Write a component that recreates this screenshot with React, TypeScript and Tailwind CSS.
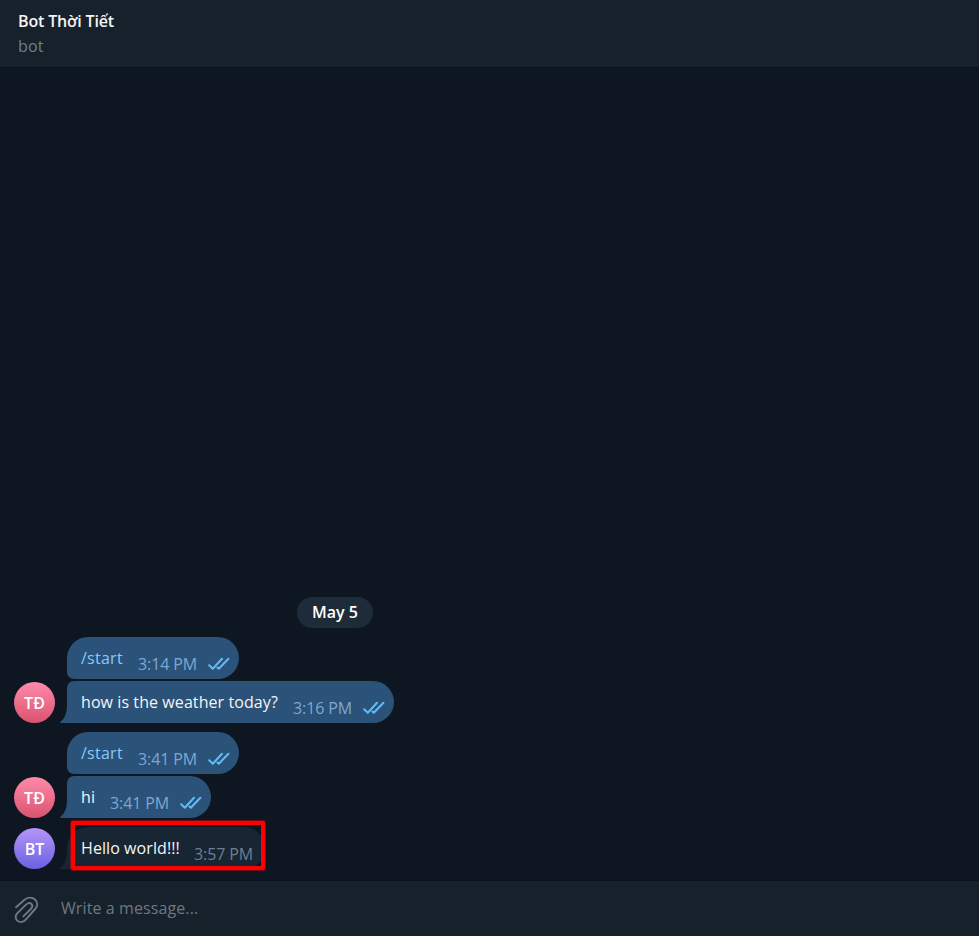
import React from "react";

type Message = {
  text: string;
  time: string;
  width: string;
  offset: string;
  command?: boolean;
  sent?: boolean;
  shape: string;
  gap: string;
  avatar?: string;
  avatarColor?: string;
};

const messages: Message[] = [
  { text: "/start", time: "3:14 PM", width: "w-[172px]", offset: "w-[57px]", command: true, sent: true, shape: "rounded-[21px] rounded-bl-[7px]", gap: "mt-[9px]" },
  { text: "how is the weather today?", time: "3:16 PM", width: "w-[327px]", offset: "w-[212px]", sent: true, shape: "rounded-[21px] rounded-tl-[7px] rounded-bl-none", gap: "mt-[2px]", avatar: "TĐ", avatarColor: "from-[#ff8aab] to-[#d9536f]" },
  { text: "/start", time: "3:41 PM", width: "w-[172px]", offset: "w-[57px]", command: true, sent: true, shape: "rounded-[21px] rounded-bl-[7px]", gap: "mt-[9px]" },
  { text: "hi", time: "3:41 PM", width: "w-[144px]", offset: "w-[29px]", sent: true, shape: "rounded-[21px] rounded-tl-[7px] rounded-bl-none", gap: "mt-[2px]", avatar: "TĐ", avatarColor: "from-[#ff8aab] to-[#d9536f]" },
  { text: "Hello world!!!", time: "3:57 PM", width: "w-[198px]", offset: "w-[113px]", shape: "rounded-[21px] rounded-bl-none", gap: "mt-[9px]", avatar: "BT", avatarColor: "from-[#b694f9] to-[#6c61df]" },
];

function Checks() {
  return (
    <svg className="ml-[11px] mt-[20px] h-[14px] w-[22px] shrink-0" viewBox="0 0 22 14" fill="none" stroke="#65b9f4" strokeWidth="2" strokeLinecap="round" strokeLinejoin="round">
      <path d="M1.2 8.2 4.8 11.8 14 1.8M9.4 10.6 10.8 11.8 20.4 1.8" />
    </svg>
  );
}

function MessageRow({ m }: { m: Message }) {
  const color = m.sent ? "bg-[#2b5278]" : "bg-[#182533]";
  return (
    <div className={`flex h-[42px] pl-[14px] ${m.gap}`}>
      <div className="w-[46px] shrink-0 pt-px">
        {m.avatar && (
          <div className={`flex size-[41px] items-center justify-center rounded-full bg-linear-to-b text-[16px] font-semibold text-white ${m.avatarColor}`}>
            {m.avatar}
          </div>
        )}
      </div>
      <div className="flex w-[7px] shrink-0 items-end">
        {m.avatar && (
          <svg className="h-[18px] w-[7px]" viewBox="0 0 7 18" fill={m.sent ? "#2b5278" : "#182533"}>
            <path d="M7 0v18H.8Q-.3 17.7.5 16.8Q7 12 7 0Z" />
          </svg>
        )}
      </div>
      <div className={`relative flex pl-[14px] text-[16px] leading-[22px] ${m.width} ${m.shape} ${color}`}>
        <span className={`shrink-0 whitespace-nowrap pt-[10px] ${m.offset} ${m.command ? "tracking-[0.25px] text-[#83caff]" : "tracking-[0.08px] text-[#f5f5f5]"}`}>{m.text}</span>
        <span className={`w-[59px] shrink-0 whitespace-nowrap pt-[16px] tracking-[-0.1px] ${m.sent ? "text-[#7da8d3]" : "text-[#6d7f8f]"}`}>{m.time}</span>
        {m.sent ? <Checks /> : <div className="absolute -top-[6px] left-[4px] h-[49px] w-[194px] rounded-[2px] border-4 border-[#ff0000] ring-1 ring-[#ff0000]/40" />}
      </div>
    </div>
  );
}

export default function App() {
  return (
    <div className="flex h-[936px] w-[979px] flex-col overflow-hidden bg-[#0e1621] font-['Open_Sans',sans-serif] text-[16px]">
      <header className="h-[67px] shrink-0 bg-[#17212b] pl-[18px] pt-[10px]">
        <div className="text-[16px] font-semibold leading-[22px] tracking-[-0.15px] text-[#f5f5f5]">Bot Thời Tiết</div>
        <div className="mt-[3px] leading-[22px] tracking-[0.2px] text-[#6d7f8f]">bot</div>
      </header>
      <div className="h-px shrink-0 bg-[#0b121a]" />
      <main className="flex min-h-0 flex-1 flex-col justify-end pb-[11px]">
        <div className="ml-[297px] flex h-[31px] w-[76px] items-center justify-center rounded-full bg-[#1e2c3a] pb-[2px] font-semibold text-white">May 5</div>
        {messages.map((m, i) => <MessageRow key={i} m={m} />)}
      </main>
      <div className="h-px shrink-0 bg-[#0b121a]" />
      <footer className="flex h-[55px] shrink-0 bg-[#17212b]">
        <svg className="ml-[14px] mt-[15px] h-[28px] w-[25px] shrink-0" viewBox="0 0 25 28" fill="none" stroke="#6d7883" strokeWidth="1.9" strokeLinecap="round" strokeLinejoin="round">
          <path d="M2 11.2 10.2 4C13.7.9 18.2.9 21 3.5C24 6.4 23.8 10.2 21.2 13L11.8 23.6C8.9 27 5.3 26.6 3.2 24.6C1 22.5 1.2 19.4 3.4 17.1L12 8.6C14.2 6.6 16.2 6.8 17.4 8C18.7 9.3 18.6 11 17.3 12.5L9.3 20.4" />
        </svg>
        <span className="ml-[22px] pt-[16px] leading-[22px] tracking-[0.1px] text-[#6d7883]">Write a message...</span>
      </footer>
    </div>
  );
}
